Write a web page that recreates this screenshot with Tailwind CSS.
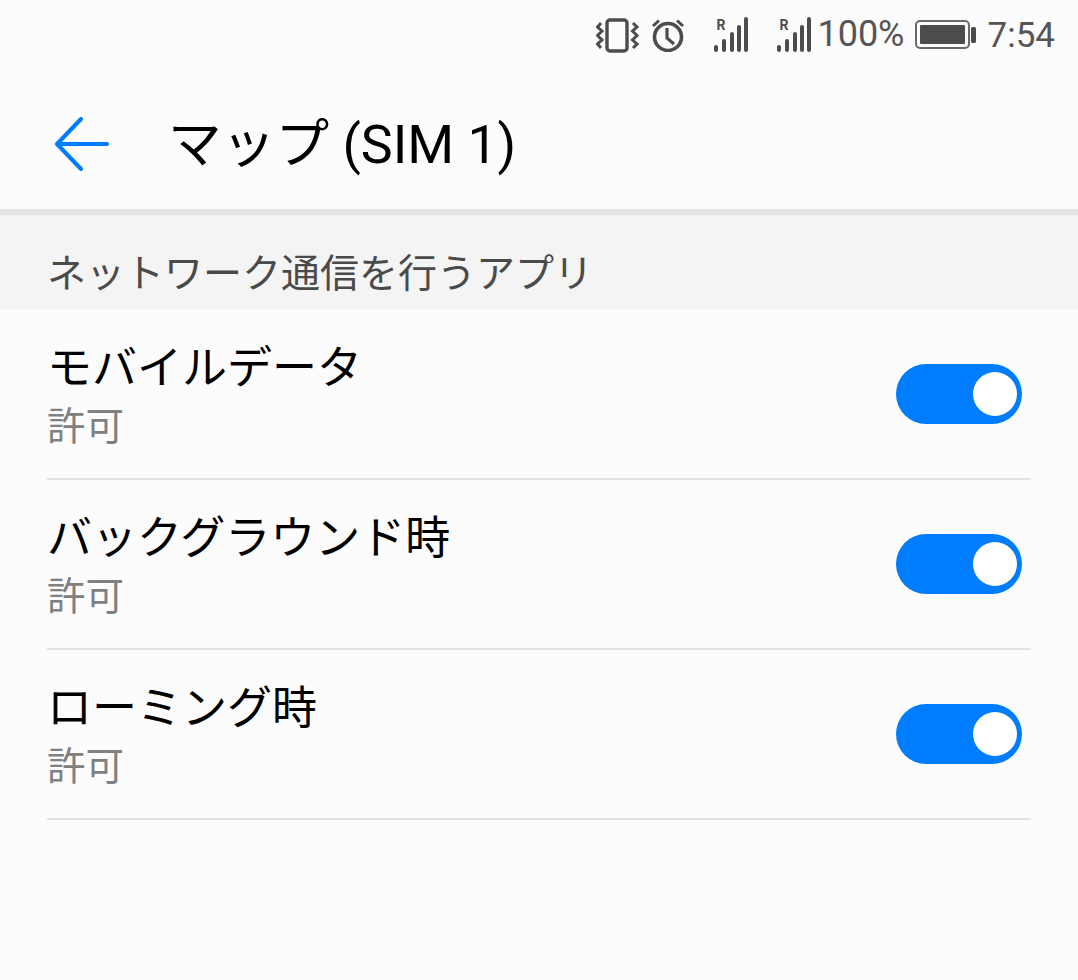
<!DOCTYPE html>
<html lang="ja">
<head>
<meta charset="utf-8">
<script src="https://cdn.jsdelivr.net/npm/@tailwindcss/browser@4"></script>
</head>
<body class="m-0 bg-[#fcfcfc]">
<div class="w-[1078px] h-[980px] overflow-hidden bg-[#fcfcfc] font-['Roboto','Noto_Sans_CJK_JP',sans-serif]">
  <!-- status bar -->
  <div class="h-[72px] flex items-start justify-end text-[#4c4c4c]">
    <svg class="mt-[18px] shrink-0" width="44" height="36" viewBox="0 0 44 36" fill="none" stroke="#4c4c4c">
      <rect x="11" y="2" width="20" height="31" rx="3" stroke-width="3.400"/>
      <path d="M5 5 L1.5 9 L6 13 L1.5 17.500 L6 22 L1.500 26 L5 30" stroke-width="3"/>
      <path d="M37 5 L41 9 L36.500 13 L41 17.500 L36.500 22 L41 26 L37 30" stroke-width="3"/>
    </svg>
    <svg class="mt-[18px] ml-[11px] shrink-0" width="34" height="34" viewBox="0 0 34 34" fill="none" stroke="#4c4c4c">
      <circle cx="17" cy="19" r="13.500" stroke-width="3.600"/>
      <path d="M16 10 V20 L23 26" stroke-width="3.200"/>
      <path d="M2 8 L8 2.500 M32 8 L26 2.500" stroke-width="3"/>
    </svg>
    <div class="relative w-[36px] h-[36px] mt-[17px] ml-[28px] shrink-0">
      <span class="absolute left-[3px] top-[1px] text-[14px] font-bold leading-[14px]">R</span>
      <svg class="absolute left-0 top-0" width="36" height="36" viewBox="0 0 36 36" fill="none" stroke="#4c4c4c" stroke-width="4" stroke-linecap="round">
        <path d="M3 30 V33 M11 24 V33 M19 17 V33 M26 10 V33 M33 2 V33"/>
      </svg>
    </div>
    <div class="relative w-[36px] h-[36px] mt-[17px] ml-[27px] shrink-0">
      <span class="absolute left-[3px] top-[1px] text-[14px] font-bold leading-[14px]">R</span>
      <svg class="absolute left-0 top-0" width="36" height="36" viewBox="0 0 36 36" fill="none" stroke="#4c4c4c" stroke-width="4" stroke-linecap="round">
        <path d="M3 30 V33 M11 24 V33 M19 17 V33 M26 10 V33 M33 2 V33"/>
      </svg>
    </div>
    <span class="ml-[5px] mt-[12px] text-[36px] leading-[44px] shrink-0 text-[#555555]">100%</span>
    <svg class="ml-[10px] mt-[20px] shrink-0" width="61" height="29" viewBox="0 0 61 29">
      <rect x="1" y="1" width="53" height="27" rx="4" fill="none" stroke="#6a6a6a" stroke-width="2"/>
      <rect x="5" y="5" width="45" height="19" fill="#4c4c4c" rx="1"/>
      <rect x="56" y="7" width="5" height="16" rx="1.500" fill="#4c4c4c"/>
    </svg>
    <span class="ml-[12px] mr-[23px] mt-[14px] text-[35px] leading-[44px] shrink-0 text-[#555555]">7:54</span>
  </div>
  <!-- app bar -->
  <div class="h-[143px] flex items-center border-b-[6px] border-[#e4e4e4]">
    <svg class="ml-[55px] shrink-0 mt-[6px]" width="54" height="54" viewBox="0 0 54 54" fill="none" stroke="#007dff" stroke-width="4" stroke-linecap="round" stroke-linejoin="round">
      <path d="M52 27 H3 M26 2 L2 27 L26 52"/>
    </svg>
    <span class="ml-[59px] text-[53.700px] leading-[60px] text-black mt-[9px]">マップ (SIM 1)</span>
  </div>
  <!-- section header -->
  <div class="h-[95px] bg-[#f4f4f4] pl-[47px] pt-[34px]">
    <span class="block text-[39px] leading-[50px] text-[#4a4a4a]">ネットワーク通信を行うアプリ</span>
  </div>
  <!-- rows -->
  <div class="px-[47px]">
    <div class="h-[170px] flex items-center justify-between border-b-2 border-[#e2e2e2]">
      <div class="pt-[5px]">
        <div class="text-[45px] leading-[60px] text-black">モバイルデータ</div>
        <div class="text-[38.500px] leading-[54px] text-[#808080] mt-[1px]">許可</div>
      </div>
      <div class="w-[126px] h-[60px] rounded-full bg-[#007dff] flex items-center justify-end pr-[5px] mr-[9px]">
        <div class="w-[44px] h-[44px] rounded-full bg-white"></div>
      </div>
    </div>
    <div class="h-[170px] flex items-center justify-between border-b-2 border-[#e2e2e2]">
      <div class="pt-[5px]">
        <div class="text-[45px] leading-[60px] text-black">バックグラウンド時</div>
        <div class="text-[38.500px] leading-[54px] text-[#808080] mt-[1px]">許可</div>
      </div>
      <div class="w-[126px] h-[60px] rounded-full bg-[#007dff] flex items-center justify-end pr-[5px] mr-[9px]">
        <div class="w-[44px] h-[44px] rounded-full bg-white"></div>
      </div>
    </div>
    <div class="h-[170px] flex items-center justify-between border-b-2 border-[#e2e2e2]">
      <div class="pt-[5px]">
        <div class="text-[45px] leading-[60px] text-black">ローミング時</div>
        <div class="text-[38.500px] leading-[54px] text-[#808080] mt-[1px]">許可</div>
      </div>
      <div class="w-[126px] h-[60px] rounded-full bg-[#007dff] flex items-center justify-end pr-[5px] mr-[9px]">
        <div class="w-[44px] h-[44px] rounded-full bg-white"></div>
      </div>
    </div>
  </div>
</div>
</body>
</html>
